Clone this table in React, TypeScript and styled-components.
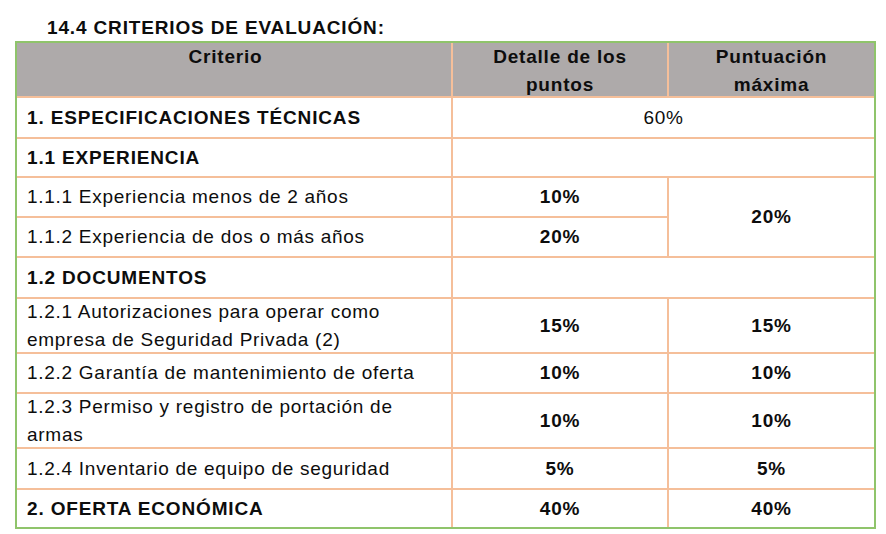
import React from "react";
import styled, { createGlobalStyle } from "styled-components";

const Global = createGlobalStyle`
  html, body { margin: 0; padding: 0; background: #ffffff; }
  body { font-family: "Liberation Sans", Arial, sans-serif; color: #0d0d0d; }
`;

const Page = styled.div`
  padding: 14px 0 0 15px;
  width: 861px;
`;

const Title = styled.h2`
  margin: 0;
  padding-left: 32px;
  font-size: 19px;
  font-weight: 700;
  letter-spacing: 0.85px;
  line-height: 27px;
  height: 27px;
  color: #0d0d0d;
`;

const Frame = styled.div`
  display: grid;
  grid-template-columns: 434px 214px 205px;
  grid-template-rows: 53px 39px 37px 38px 38px 39px 53px 38px 53px 39px 37px;
  gap: 2px;
  background: #f5bf9a;
  border: 2px solid #8fc46b;
  font-size: 19px;
  line-height: 27.5px;
  letter-spacing: 0.72px;
`;

const Cell = styled.div<{
  $bold?: boolean;
  $left?: boolean;
  $col?: string;
  $row?: string;
}>`
  display: flex;
  align-items: center;
  justify-content: ${(p) => (p.$left ? "flex-start" : "center")};
  text-align: ${(p) => (p.$left ? "left" : "center")};
  padding: ${(p) => (p.$left ? "0 12px 0 10px" : "0 8px")};
  background: #ffffff;
  font-weight: ${(p) => (p.$bold ? 700 : 400)};
  letter-spacing: ${(p) => (p.$bold ? "0.84px" : "0.72px")};
  min-width: 0;
  min-height: 0;
  ${(p) => (p.$col ? `grid-column: ${p.$col};` : "")}
  ${(p) => (p.$row ? `grid-row: ${p.$row};` : "")}
`;

const HeadCell = styled.div<{ $shift?: number }>`
  background: #aeaaaa;
  font-weight: 700;
  letter-spacing: 0.8px;
  text-align: center;
  padding: 0 ${(p) => 8 + (p.$shift || 0)}px 0 8px;
  color: #0d0d0d;
  min-height: 0;
`;

export default function App() {
  return (
    <>
      <Global />
      <Page>
        <Title>14.4 CRITERIOS DE EVALUACIÓN:</Title>
        <Frame>
          <HeadCell $shift={17}>Criterio</HeadCell>
          <HeadCell>
            Detalle de los
            <br />
            puntos
          </HeadCell>
          <HeadCell>
            Puntuación
            <br />
            máxima
          </HeadCell>

          <Cell $left $bold>1. ESPECIFICACIONES TÉCNICAS</Cell>
          <Cell $col="2 / 4">60%</Cell>

          <Cell $left $bold>1.1 EXPERIENCIA</Cell>
          <Cell $col="2 / 4" />

          <Cell $left>1.1.1 Experiencia menos de 2 años</Cell>
          <Cell $bold>10%</Cell>
          <Cell $bold $col="3" $row="4 / 6">
            20%
          </Cell>

          <Cell $left>1.1.2 Experiencia de dos o más años</Cell>
          <Cell $bold>20%</Cell>

          <Cell $left $bold>1.2 DOCUMENTOS</Cell>
          <Cell $col="2 / 4" />

          <Cell $left>
            1.2.1 Autorizaciones para operar como empresa de Seguridad Privada
            (2)
          </Cell>
          <Cell $bold>15%</Cell>
          <Cell $bold>15%</Cell>

          <Cell $left>1.2.2 Garantía de mantenimiento de oferta</Cell>
          <Cell $bold>10%</Cell>
          <Cell $bold>10%</Cell>

          <Cell $left>1.2.3 Permiso y registro de portación de armas</Cell>
          <Cell $bold>10%</Cell>
          <Cell $bold>10%</Cell>

          <Cell $left>1.2.4 Inventario de equipo de seguridad</Cell>
          <Cell $bold>5%</Cell>
          <Cell $bold>5%</Cell>

          <Cell $left $bold>2. OFERTA ECONÓMICA</Cell>
          <Cell $bold>40%</Cell>
          <Cell $bold>40%</Cell>
        </Frame>
      </Page>
    </>
  );
}
